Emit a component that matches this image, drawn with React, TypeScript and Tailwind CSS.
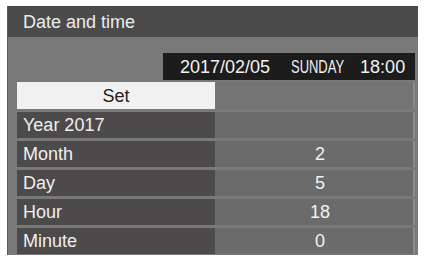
import React from 'react';

const rows = [
  { label: 'Month', value: '2' },
  { label: 'Day', value: '5' },
  { label: 'Hour', value: '18' },
  { label: 'Minute', value: '0' },
];

const App: React.FC = () => {
  return (
    <div className="w-[426px] h-[262px] bg-white pt-[6px] pl-[7px]" style={{ fontFamily: '"Liberation Sans", Arial, sans-serif' }}>
      <div className="w-[411px] h-[249px] flex flex-col bg-[#797979] border-l border-[#5a5a5a]">
        {/* title */}
        <div className="h-[31px] shrink-0 bg-[#4b4b4b] flex items-center pl-[15px] text-[18px] text-[#ececec] leading-none">
          Date and time
        </div>

        <div className="flex-1 flex flex-col pl-[9px] pr-[3px] pt-[16px] gap-[3px]">
          {/* current date display */}
          <div className="flex justify-end">
            <div className="w-[252px] h-[27px] bg-[#1c1c1c] flex items-center pl-[17px] text-[18px] text-[#f2f2f2] leading-none whitespace-nowrap">
              <span>2017/02/05</span>
              <span className="inline-block w-[54px] ml-[21px] [transform:scaleX(0.72)] origin-left">SUNDAY</span>
              <span className="ml-[15px]">18:00</span>
            </div>
          </div>

          {/* set */}
          <div className="flex h-[27px] -mt-[1px]">
            <div className="w-[198px] bg-[#f1f1f1] flex items-center justify-center text-[18px] text-[#222] leading-none">
              Set
            </div>
            <div className="flex-1 bg-[#747474] border-r-2 border-[#8a8a8a]" />
          </div>

          {/* year */}
          <div className="flex h-[26px]">
            <div className="w-[198px] bg-[#4c4a4a] flex items-center pl-[6px] text-[18px] text-[#efefef] leading-none">
              Year 2017
            </div>
            <div className="flex-1 bg-[#6b6b6b] border-r-2 border-[#8a8a8a]" />
          </div>

          {rows.map(r => (
            <div key={r.label} className="flex h-[26px]">
              <div className="w-[198px] bg-[#4c4a4a] flex items-center pl-[6px] text-[18px] text-[#efefef] leading-none">
                {r.label}
              </div>
              <div className="flex-1 bg-[#6b6b6b] border-r-2 border-[#8a8a8a] flex items-center justify-center pl-[12px] text-[18px] text-[#f2f2f2] leading-none">
                {r.value}
              </div>
            </div>
          ))}
        </div>
      </div>
    </div>
  );
};

export default App;
